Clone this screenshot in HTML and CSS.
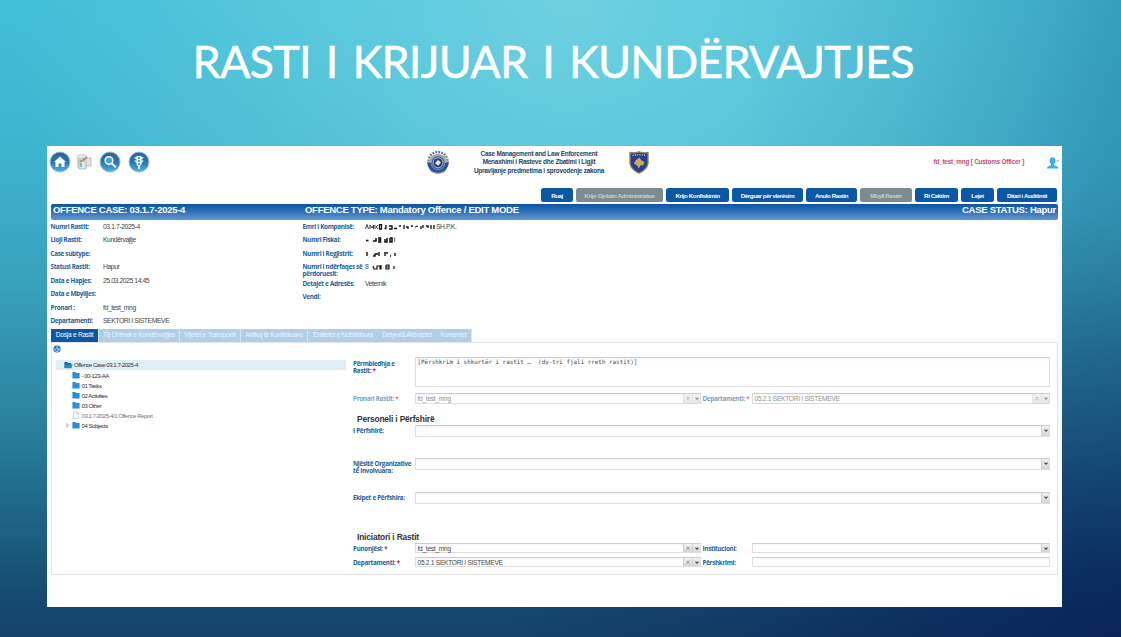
FILE: index.html
```html
<!DOCTYPE html>
<html lang="sq">
<head>
<meta charset="utf-8">
<title>Rasti i krijuar i kundërvajtjes</title>
<link rel="stylesheet" href="styles.css">
</head>
<body>
<svg class="defs" width="0" height="0">
  <defs>
    <linearGradient id="orb" x1="0" y1="0" x2="0" y2="1"><stop offset="0" stop-color="#2d6596"/><stop offset=".5" stop-color="#2676b4"/><stop offset="1" stop-color="#4cb4e4"/></linearGradient>
    <symbol id="folder" viewBox="0 0 8 8"><path d="M.4 1h3l.8 1h3.400v5.400H.4z" fill="#2590dc"/></symbol>
    <symbol id="down" viewBox="0 0 8 10"><path d="M2.300 4l1.700 1.700L5.700 4" fill="none" stroke="#444" stroke-width="1.200"/></symbol>
    <symbol id="cross" viewBox="0 0 8 10"><path d="M2.500 3l3 3.400M5.500 3l-3 3.400" fill="none" stroke="#777" stroke-width=".8"/></symbol>
  </defs>
</svg>
<h1 class="title"><span>RASTI I KRIJUAR I KUNDËRVAJTJES</span></h1>
<main class="panel">
  <header class="top">
    <nav class="orbs">
      <svg width="22" height="22" viewBox="0 0 22 22"><circle cx="11" cy="11" r="10" fill="url(#orb)" stroke="#a5b6c8"/><path d="M5 11l6-5.500L17 11h-1.500v5h-3v-3.500h-3V16h-3v-5z" fill="#fff"/></svg>
      <svg class="report" width="18" height="18" viewBox="0 0 18 18"><path d="M2 3.500v11c1 1.500 8 1.500 10 0v-11z" fill="#d0d4d7"/><ellipse cx="7" cy="3.500" rx="5" ry="2" fill="#e6e8e9" stroke="#aaa" stroke-width=".5"/><rect x="9" y="5" width="7" height="8" fill="#e4e4e4" stroke="#999" stroke-width=".6"/><rect x="4" y="8" width="7" height="8" fill="#e2e8ec" stroke="#999" stroke-width=".6"/><path d="M5 9l3-2 2-1 2-2" fill="none" stroke="#d8683b" stroke-width="1.200"/><path d="M5 10h2v4H5z" fill="#72b9df"/><path d="M7 8l4-2" stroke="#6ebc55"/></svg>
      <svg width="22" height="22" viewBox="0 0 22 22"><circle cx="11" cy="11" r="10" fill="url(#orb)" stroke="#a5b6c8"/><circle cx="10" cy="9.500" r="3.800" fill="#4b9fd0" stroke="#fff" stroke-width="1.500"/><path d="M12.800 12.400l4 4" stroke="#fff" stroke-width="2"/></svg>
      <svg width="22" height="22" viewBox="0 0 22 22"><circle cx="11" cy="11" r="10" fill="url(#orb)" stroke="#a5b6c8"/><path d="M8.500 5h5v1.200H16l-2.500 2.500v.8H16l-2.500 2.500v1.500L12 15v3h-2v-3l-1.500-1.500V12L6 9.500h2.500v-.8L6 6.200h2.500z" fill="#eef8ff"/><circle cx="11" cy="7" r="1.100" fill="#2f83bd"/><circle cx="11" cy="10" r="1.100" fill="#2f83bd"/><circle cx="11" cy="13" r="1.100" fill="#2f83bd"/></svg>
    </nav>
    <div class="brand">
      <svg width="24" height="24" viewBox="0 0 24 24"><circle cx="12" cy="10.500" r="9.500" fill="none" stroke="#6f7780" stroke-width="2.400" stroke-dasharray="1.900 1.080"/><circle cx="12" cy="11.500" r="8.700" fill="#a0a7af"/><path d="M1.300 11a10.700 11.500 0 0 0 21.400 0l-3.700 1a7 7 0 0 1-14 0z" fill="#2d4f96"/><circle cx="12" cy="11.800" r="6.500" fill="#3a5ba0"/><circle cx="12" cy="11.800" r="5" fill="#233f83" stroke="#aeb9cf" stroke-width="1"/><path d="M12 8.800l3 2.700-2.800 3.200-3.200-2.400z" fill="#ede4b8"/><path d="M5 20.500q7 3.500 14 0" stroke="#b5aa83" fill="none" stroke-width="1.200"/></svg>
      <p class="agency"><span>Case Management and Law Enforcement</span><span>Menaxhimi i Rasteve dhe Zbatimi i Ligjit</span><span>Upravljanje predmetima i sprovodenje zakona</span></p>
      <svg width="20" height="23" viewBox="0 0 20 23"><path d="M1 1.500q4.500 1 9-.7 4.500 1.700 9 .7v11q-1 6-9 9.700-8-3.700-9-9.700z" fill="#25418b" stroke="#94805f" stroke-width="1.400"/><path d="M3.500 4.500q6.500-1.500 13 0" fill="none" stroke="#d9d7cf" stroke-width="1.200" stroke-dasharray="1.200 1.100"/><path d="M10.500 6.500l1.800 2.700 3.200 2-1.300 2.800-2.700.5-1.700 3-1.700-3L5 12.500l1.500-3z" fill="#d0a65c"/></svg>
    </div>
    <span class="user">fd_test_mng [ Customs Officer ]</span>
    <svg class="avatar" width="13" height="12" viewBox="0 0 13 12"><ellipse cx="5.500" cy="3.700" rx="3" ry="3.500" fill="#38b0ea"/><path d="M0 11.500q0-2.500 4-3.200V6h3v2.300q4.500.7 4.500 3.200z" fill="#38b0ea"/><path d="M9 3.500h3.500L10.800 5.300z" fill="#54bcea"/></svg>
  </header>
  <div class="actions">
    <button class="b1">Ruaj</button><button class="b2 off">Krijo Gjobën Administrative</button><button class="b3">Krijo Konfiskimin</button><button class="b4">Dërguar për vlerësim</button><button class="b5">Anulo Rastin</button><button class="b6 off">Mbyll Rastin</button><button class="b7">Ri Caktim</button><button class="b8">Lejet</button><button class="b9">Ditari i Auditimit</button>
  </div>
  <div class="banner"><span class="case">OFFENCE CASE: 03.1.7-2025-4</span><span class="type">OFFENCE TYPE: Mandatory Offence / EDIT MODE</span><span class="status">CASE STATUS: Hapur</span></div>
  <section class="facts">
    <dl class="left">
      <dt>Numri Rastit:</dt><dd>03.1.7-2025-4</dd>
      <dt>Lloji Rastit:</dt><dd>Kundërvajtje</dd>
      <dt>Case subtype:</dt><dd></dd>
      <dt>Statusi Rastit:</dt><dd>Hapur</dd>
      <dt>Data e Hapjes:</dt><dd>25.03.2025 14:45</dd>
      <dt>Data e Mbylljes:</dt><dd></dd>
      <dt>Pronari :</dt><dd>fd_test_mng</dd>
      <dt>Departamenti:</dt><dd>SEKTORI I SISTEMEVE</dd>
    </dl>
    <dl class="right">
      <dt>Emri i Kompanisë:</dt><dd><svg width="71" height="7" viewBox="0 0 71 7"><g fill="none" stroke="#111"><path d="M.5 6L2 1.500 3.500 6M5 6V2l2 3 1.500-3v4M10 2v4m3-4l-2 2 2 2" stroke-width=".8"/><path d="M14.500 1.700h2V6h-2zM19.500 5.500h2M21 2v3M24 3h3v3h-3M29 5.500h3M34 3h2M39 2v4M41 4h2v2M46 3h2M50 4l3-1M56 3v3m2-4v3M61 3h2v2M66 2v4m3-4v4" stroke-width="1.300"/></g></svg><span>SH.P.K.</span></dd>
      <dt>Numri Fiskal:</dt><dd><svg width="32" height="8" viewBox="0 0 32 8"><path d="M1 4.500h2.500M8 5h3V2M13 2h2.500v4H13m2-2h-2M20 3v3h2V2M25 2v4h2V2h-2" fill="none" stroke="#111" stroke-width="1.500"/><path d="M29.700 1.500V6" stroke="#754"/></svg></dd>
      <dt>Numri i Regjistrit:</dt><dd><svg width="32" height="8" viewBox="0 0 32 8"><path d="M2 2v4M8 6h2V4h3m1-2v4M20 2v4m1-3h2M25 6h1M30 3v3" fill="none" stroke="#111" stroke-width="1.400"/></svg></dd>
      <dt class="two">Numri i ndërfaqes së<br>përdoruesit:</dt><dd>8<svg width="27" height="8" viewBox="0 0 27 8"><path d="M5 3l1 3h3V3h3v3h1V2M18 2h3v4h-3V2m0 2h3M26 3v3" fill="none" stroke="#111" stroke-width="1.200"/></svg></dd>
      <dt>Detajet e Adresës:</dt><dd>Veternik</dd>
      <dt>Vendi:</dt><dd></dd>
    </dl>
  </section>
  <nav class="tabs"><a class="t1 on">Dosja e Rastit</a><a class="t2">Të Dhënat e Kundërvajtjes</a><a class="t3">Mjetet e Transportit</a><a class="t4">Artikuj të Konfiskuara</a><a class="t5">Entitetet e Ndërlidhura</a><a class="t6">Detyrat&amp;Aktivitetet</a><a class="t7">Komentet</a></nav>
  <section class="work">
    <aside class="side">
      <svg class="refresh" width="8" height="8" viewBox="0 0 8 8"><circle cx="4" cy="4" r="3.600" fill="#1c6fc0"/><path d="M4 1.300v2.900h1.700M2 3.200a2.200 2.200 0 1 0 4 0" fill="none" stroke="#fff" stroke-width=".8"/></svg>
      <ul class="tree">
        <li class="root"><svg width="9" height="8" viewBox="0 0 9 8"><path d="M.4 1h3l.8 1h3v5H.4z" fill="#1768ab"/><path d="M1.500 3.500h7.200L7.300 7.200H.7z" fill="#2489d2"/></svg><span>Offence Case 03.1.7-2025-4</span></li>
        <li><svg width="8" height="8"><use href="#folder"/></svg><span>- 00-123-AA</span></li>
        <li><svg width="8" height="8"><use href="#folder"/></svg><span>01 Tasks</span></li>
        <li><svg width="8" height="8"><use href="#folder"/></svg><span>02 Activities</span></li>
        <li><svg width="8" height="8"><use href="#folder"/></svg><span>03 Other</span></li>
        <li class="file"><svg width="8" height="8" viewBox="0 0 8 8"><path d="M1.500.8h3.200l2 2v4.700H1.500zM4.700.8v2h2" fill="#fff" stroke="#a9bcc9" stroke-width=".6"/></svg><span>03.1.7-2025-4/1 Offence Report</span></li>
        <li class="branch"><svg class="arrow" width="4" height="5" viewBox="0 0 4 5"><path d="M.8.5l2 2-2 2z" fill="#fff" stroke="#888" stroke-width=".6"/></svg><svg width="8" height="8"><use href="#folder"/></svg><span>04 Subjects</span></li>
      </ul>
    </aside>
    <form class="form">
      <div class="row summary"><label>Përmbledhja e<br>Rastit: <i>*</i></label><div class="field area">[Përshkrim i shkurtër i rastit …&nbsp; (dy-tri fjali rreth rastit)]</div></div>
      <div class="row pair faded owner"><label>Pronari Rastit: <i>*</i></label><div class="field"><span>fd_test_mng</span><b><svg><use href="#cross"/></svg></b><b><svg><use href="#down"/></svg></b></div><label>Departamenti: <i>*</i></label><div class="field"><span>05.2.1 SEKTORI I SISTEMEVE</span><b><svg><use href="#cross"/></svg></b><b><svg><use href="#down"/></svg></b></div></div>
      <h2 class="h-staff">Personeli i Përfshirë</h2>
      <div class="row tall"><label>I Përfshirë:</label><div class="field"><span></span><b><svg><use href="#down"/></svg></b></div></div>
      <div class="row tall"><label class="wrap">Njësitë Organizative<br>të Involvuara:</label><div class="field"><span></span><b><svg><use href="#down"/></svg></b></div></div>
      <div class="row tall"><label>Ekipet e Përfshira:</label><div class="field"><span></span><b><svg><use href="#down"/></svg></b></div></div>
      <h2 class="h-init">Iniciatori i Rastit</h2>
      <div class="row pair"><label>Punonjësi: <i>*</i></label><div class="field"><span>fd_test_mng</span><b><svg><use href="#cross"/></svg></b><b><svg><use href="#down"/></svg></b></div><label>Institucioni:</label><div class="field"><span></span><b><svg><use href="#down"/></svg></b></div></div>
      <div class="row pair"><label>Departamenti: <i>*</i></label><div class="field"><span>05.2.1 SEKTORI I SISTEMEVE</span><b><svg><use href="#cross"/></svg></b><b><svg><use href="#down"/></svg></b></div><label>Përshkrimi:</label><div class="field"></div></div>
    </form>
  </section>
</main>
</body>
</html>
```
FILE: styles.css
```css
* { box-sizing: border-box; }
body {
  margin: 0; width: 1121px; height: 637px; overflow: hidden;
  font-family: "Liberation Sans", sans-serif; color: #444;
  background:
    radial-gradient(ellipse 560px 520px at 570px 0, rgba(118, 212, 227, .85), rgba(110, 207, 224, 0)),
    radial-gradient(ellipse 620px 420px at 1121px 637px, rgba(0, 16, 80, .55), rgba(0, 16, 80, 0)),
    linear-gradient(90deg, transparent 65%, rgba(0, 30, 80, .2) 100%),
    linear-gradient(180deg, #40bed8 0, #3eb4cf 150px, #38a0bb 290px, #287c9b 440px, #174c72 590px, #154369 637px);
}
.defs { display: block; height: 0; }
svg { display: block; flex: none; }
.title { margin: 0; height: 146px; padding: 34px 0 0 192.500px; color: #fff; font: 400 45px/54px Lato, sans-serif; letter-spacing: -.8px; word-spacing: 4.200px; -webkit-text-stroke: .5px #fff; white-space: nowrap; }
.panel { width: 1015px; height: 461px; margin-left: 47px; background: #fff; padding: 0 4px; }

.top { display: flex; height: 42px; align-items: flex-start; }
.orbs { display: flex; align-items: center; margin: 5px 0 0 -2px; width: 372px; height: 22px; }
.orbs .report { margin: 0 6px 0 4px; }
.orbs svg:last-child { margin-left: 7px; }
.brand { display: flex; width: 500px; padding: 5px 0 0 5px; }
.agency { margin: -.8px 0 0 1px; width: 176px; display: flex; flex-direction: column; align-items: center; font: bold 6.400px/8.200px "Liberation Sans", sans-serif; letter-spacing: -.21px; color: #1c3f66; white-space: nowrap; }
.agency + svg { margin-left: 2px; }
.user { margin: 11px 0 0 12.500px; width: 113.500px; font: bold 6.300px/9px "Liberation Sans", sans-serif; letter-spacing: -.17px; color: #c8497c; white-space: nowrap; }
.avatar { margin: 11px -4px 0 0; }

.actions { display: flex; gap: 3px; height: 16px; padding-left: 490px; }
.actions button { height: 14px; border: 0; border-radius: 2.500px; padding: 1px 0 0; background: #0a57a4; color: #fff; font: bold 6.200px/13px "Liberation Sans", sans-serif; letter-spacing: -.42px; white-space: nowrap; }
.actions .off { background: #7c8b8d; color: #c9d2d4; }
.b1 { width: 32px; } .b2 { width: 87px; } .b3 { width: 63px; } .b4 { width: 71px; } .b5 { width: 51px; }
.b6 { width: 52px; } .b7 { width: 43px; } .b8 { width: 33px; } .b9 { width: 60px; }

.banner { display: flex; height: 16px; width: 1007px; padding: 0 2px 0 2px; border-radius: 2px; background: linear-gradient(#0c55a3, #2f72b9 50%, #6298d1); color: #fff; font: bold 9.500px/12px "Liberation Sans", sans-serif; letter-spacing: -.27px; white-space: nowrap; }
.case { width: 252px; }
.status { margin-left: auto; }

.facts { display: flex; height: 109px; margin: -.2px 0 -.5px -.5px; }
dl { margin: 0; display: grid; align-content: start; font-size: 6.800px; letter-spacing: -.42px; line-height: 13.500px; grid-auto-rows: 13.500px; white-space: nowrap; }
.left { grid-template-columns: 52.500px 199.500px; }
.right { grid-template-columns: 62.500px 200px; grid-template-rows: 13.500px 13.500px 13.500px 16.500px 13.500px 13.500px; }
dt { font: bold 6.300px/13.500px "Open Sans", sans-serif; letter-spacing: -.29px; color: #175f9d; }
dd { margin: 0; display: flex; align-items: center; height: 13.500px; }
dt.two { line-height: 7px; padding-top: 3px; }

.tabs { display: flex; height: 13px; font-size: 6.600px; letter-spacing: -.25px; line-height: 12.500px; white-space: nowrap; margin-top: .7px; }
.tabs a { background: #b1cee8; color: #eaf4fd; text-align: center; border-right: 1px solid #d8e7f4; }
.tabs .on { background: #0d57a3; color: #fff; }
.t1 { width: 48px; } .t2 { width: 81px; } .t3 { width: 61px; } .t4 { width: 67px; } .t5 { width: 70px; } .t6 { width: 58px; } .t7 { width: 36px; }
.tabs .t5, .tabs .t6 { border-right: 0; }

.work { display: flex; width: 1007px; height: 233px; border: 1px solid #e4e4e4; }
.side { width: 301px; padding: 2px 0 0 1px; }
.tree { list-style: none; margin: 6.500px 0 0 3px; padding: 0; font-size: 6.100px; letter-spacing: -.5px; color: #333; width: 290px; }
.tree li { display: flex; align-items: center; height: 10px; padding-left: 15.500px; gap: 2px; white-space: nowrap; }
.tree .root { background: #dfeef5; height: 10.500px; padding-left: 7.500px; gap: 1.500px; }
.tree .file { color: #777; }
.tree .branch { padding-left: 10px; gap: 2px; }
.tree .arrow { margin-right: -.5px; }

.form { padding-top: 14px; }
.row { display: grid; grid-template-columns: 62px 635px; }
.pair { grid-template-columns: 62px 286px 51px 298px; margin-bottom: 3.500px; }
.form label { font: bold 6.300px/11.500px "Open Sans", sans-serif; letter-spacing: -.29px; color: #175f9d; white-space: nowrap; }
.pair { height: 10.500px; }
.pair label:nth-of-type(2) { padding-left: 1.500px; }
.form i { color: #e21b25; font-style: normal; }
.field { height: 10.500px; border: 1px solid #ddd; border-top-color: #ccc; display: flex; font-size: 6.600px; letter-spacing: -.27px; line-height: 9.500px; color: #444; background: linear-gradient(#f5f5f5, #fff 3px); white-space: nowrap; }
.field span { flex: 1; padding-left: 1.500px; }
.field b { width: 8.500px; background: linear-gradient(#f1f1f1, #d5d5d5); border-left: 1px solid #d0d0d0; }
.field b svg { width: 8px; height: 9px; }
.summary { height: 36px; }
.form .summary label { line-height: 7px; padding-top: 2.500px; }
.form .area { height: 30px; display: block; font: 5.900px/9px "DejaVu Sans Mono", monospace; letter-spacing: 0; padding-left: 1.500px; }
.owner { height: 11.500px; margin: 0; }
.faded label, .faded .field > * { opacity: .6; }
.faded .field { height: 11px; }
h2 { margin: 0 0 0 4px; height: 12px; font: bold 8.400px/13px "Liberation Sans", sans-serif; color: #333; letter-spacing: -.17px; }
.h-staff { margin-top: 8px; }
.tall { height: 33.700px; }
.tall .field { height: 12px; }
.form .tall label { line-height: 11px; }
.form .tall .wrap { line-height: 7px; padding-top: 2px; }
.h-init { margin-top: 5.500px; height: 11.500px; }
```
